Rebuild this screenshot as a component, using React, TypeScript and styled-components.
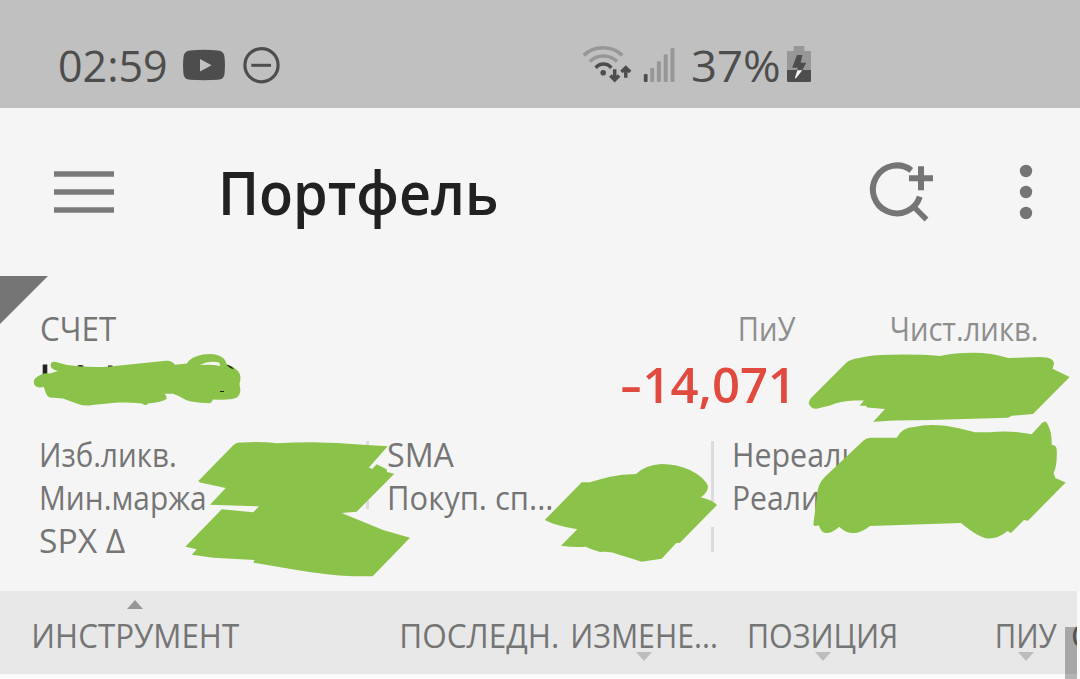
import styled, { createGlobalStyle } from 'styled-components';

const App: React.FC = () => {
  return (
    <>
      <GlobalStyle />
      <Screen>
        <StatusBar>
          <StatusText $width={107}>02:59</StatusText>
          <YoutubeIcon />
          <DoNotDisturbIcon />
          <StatusSpacer />
          <WifiIcon />
          <SignalIcon />
          <StatusText $width={96} $scale={1.06}>
            37%
          </StatusText>
          <BatteryIcon />
        </StatusBar>

        <AppBar>
          <MenuIcon />
          <Title>Портфель</Title>
          <SearchAddIcon />
          <MoreIcon />
        </AppBar>

        <Account>
          <Corner />
          <Summary>
            <SummaryColumn $width={456}>
              <Label $scale={0.98}>СЧЕТ</Label>
            </SummaryColumn>
            <SummaryColumn $width={299} $right>
              <Label $scale={0.91} $light $right>
                ПиУ
              </Label>
              <Amount>
                <Minus>-</Minus>14,071
              </Amount>
            </SummaryColumn>
            <SummaryColumn $width={243} $right>
              <Label $scale={0.91} $light $right>
                Чист.ликв.
              </Label>
            </SummaryColumn>
          </Summary>
          <Stats>
            <StatsColumn $width={329}>
              <StatLabel $scale={0.923}>Изб.ликв.</StatLabel>
              <StatLabel $scale={0.932}>Мин.маржа</StatLabel>
              <StatLabel $scale={1.05}>SPX Δ</StatLabel>
            </StatsColumn>
            <Divider />
            <StatsColumn $width={326}>
              <StatLabel $scale={1.005}>SMA</StatLabel>
              <StatLabel $scale={0.967}>Покуп. сп...</StatLabel>
            </StatsColumn>
            <Divider />
            <StatsColumn $width={340}>
              <StatLabel $scale={0.95}>Нереализ.</StatLabel>
              <StatLabel $scale={0.94}>Реализ.</StatLabel>
            </StatsColumn>
          </Stats>
        </Account>

        <TableHeader>
          <HeaderCell $width={369}>
            <HeaderContent>
              <SortUp />
              <HeaderLabel $scale={0.978}>ИНСТРУМЕНТ</HeaderLabel>
            </HeaderContent>
          </HeaderCell>
          <HeaderCell $width={168}>
            <HeaderContent>
              <SortSlot />
              <HeaderLabel $scale={0.985}>ПОСЛЕДН.</HeaderLabel>
            </HeaderContent>
          </HeaderCell>
          <HeaderCell $width={177}>
            <HeaderContent>
              <SortSlot />
              <HeaderLabel $scale={0.945}>ИЗМЕНЕ...</HeaderLabel>
              <SortDown />
            </HeaderContent>
          </HeaderCell>
          <HeaderCell $width={249}>
            <HeaderContent>
              <SortSlot />
              <HeaderLabel $scale={0.95}>ПОЗИЦИЯ</HeaderLabel>
              <SortDown />
            </HeaderContent>
          </HeaderCell>
          <HeaderCell $width={79}>
            <HeaderContent>
              <SortSlot />
              <HeaderLabel $scale={0.92}>ПИУ</HeaderLabel>
              <SortDown />
            </HeaderContent>
          </HeaderCell>
          <HeaderCell $width={6}>
            <HeaderContent>
              <SortSlot />
              <HeaderLabel>С</HeaderLabel>
            </HeaderContent>
          </HeaderCell>
        </TableHeader>
        <ScrollThumb />
        <Scribbles />
      </Screen>
    </>
  );
};

export default App;

const YoutubeIcon = () => (
  <StatusSvg width="42" height="40" $left={18}>
    <path
      d="M7 6.5Q21 5 35 6.5Q41 7 41.5 13Q42.4 21 41.5 30Q41 35.6 35 35.8Q21 36.6 7 35.8Q1 35.6 0.5 30Q-0.4 21 0.5 13Q1 7 7 6.5Z"
      fill="#4d4d4d"
    />
    <path d="M17 15L28.6 21.3L17 27.6Z" fill="#c0c0c0" />
  </StatusSvg>
);

const DoNotDisturbIcon = () => (
  <StatusSvg width="38" height="40" $left={18}>
    <circle cx="18.5" cy="21.2" r="16.6" fill="none" stroke="#4d4d4d" strokeWidth="3.2" />
    <path d="M8.3 21.3H28" stroke="#4d4d4d" strokeWidth="3" />
  </StatusSvg>
);

const WifiIcon = () => (
  <StatusSvg width="50" height="40" fill="none" strokeWidth="3.5">
    <path d="M1.8 11.4Q9.5 3.8 21 3.8T40.3 11.4" stroke="#979797" />
    <path d="M8 17.6Q13.2 12 21.3 12T35 17.6" stroke="#979797" />
    <path d="M13.7 23.8Q16.8 20 21.5 20T29.3 23.8" stroke="#4d4d4d" />
    <circle cx="21.2" cy="28.8" r="2.8" fill="#4d4d4d" />
    <path d="M32.7 25.3V35.5M28.3 31.6L32.7 36L37.1 31.6" stroke="#4d4d4d" />
    <path d="M43.8 33.8V24M39.4 28L43.8 23.6L48.2 28" stroke="#4d4d4d" />
  </StatusSvg>
);

const SignalIcon = () => (
  <StatusSvg width="34" height="40" $left={10} fill="#979797">
    <rect x="1.8" y="30" width="3.8" height="8" rx="1" fill="#4d4d4d" />
    <rect x="8.2" y="24" width="4" height="14" rx="1" />
    <rect x="14.9" y="17.2" width="4" height="20.8" rx="1" />
    <rect x="21.7" y="10.2" width="4" height="27.8" rx="1" />
    <rect x="28.5" y="4" width="4" height="34" rx="1" />
  </StatusSvg>
);

const BatteryIcon = () => (
  <StatusSvg width="24" height="40">
    <path d="M6.7 7V2H17.3V7H24V26.2H0V7Z" fill="#979797" />
    <path d="M0 26H24V36.5Q24 38 22.5 38H1.5Q0 38 0 36.5Z" fill="#4d4d4d" />
    <path d="M10 11H15.4L13.7 18.7H19.2L15.3 26.2H10.2L10.8 23.8H5.2Z" fill="#4d4d4d" />
    <path d="M10.4 26.2H15.3L9 34.3H7.8Z" fill="#f5f5f5" />
  </StatusSvg>
);

const MenuIcon = () => (
  <svg width="60" height="48" stroke="#7a7a7a" strokeWidth="5.6">
    <path d="M0 6H60M0 24H60M0 42H60" />
  </svg>
);

const SearchAddIcon = () => (
  <svg width="66" height="66" viewBox="868 159 66 66" fill="none" stroke="#757575" strokeWidth="6">
    <path d="M911.4 170.3A24 24 0 1 0 919.8 196.6" />
    <path d="M913.5 206.5L926.5 219.5" strokeWidth="5.4" />
    <path d="M921 166.3V190.3M909 178.3H933" />
  </svg>
);

const MoreIcon = () => (
  <MoreSvg width="14" height="56" fill="#757575">
    <circle cx="7" cy="7" r="6.2" />
    <circle cx="7" cy="28" r="6.2" />
    <circle cx="7" cy="49" r="6.2" />
  </MoreSvg>
);

const Scribbles = () => (
  <ScribbleLayer width="1080" height="679" fill="#8bc34a">
    <path
      d="M42.7 364.5H47.3V376H42.7ZM77 366Q80 364 84 366L80 369ZM108 365.6H112.5V368H108Z"
      fill="#212121"
    />
    <path
      fillRule="evenodd"
      d="M50.7 365Q51 361 56 362L67 365Q88 368 110 366.5L166 360.8Q172 360.5 175 364.8L187 363.5Q190 357 203 354.5Q212 353 218 355.2Q225 357.5 226.7 364Q233 366 238 371Q242 376 239.5 384Q242 394 237 397.5Q230 400.5 213 399.5Q211 404.5 207 403Q193 402.5 186 400Q180 396 173 393.7H164Q167 395 166.5 399Q162 402 148 403.5Q146 406.5 142 403.5Q130 402 118 402.5L92 405Q85 406.5 78 404L63 398.6L50 397.5Q46 396 44.5 389Q43 385 43.5 387Q36 388.5 34 384Q33 379 37 377Q43 372 50 373.5L58 371Q50 369 50.7 365ZM200 365Q209 360 219 362.5L220.5 366Q211 364 200 365Z"
    />
    <path d="M226.5 365Q231 365 234 369.5Q230 368.5 226.5 365ZM220 391H224V392H220Z" fill="#212121" />
    <path d="M809 404Q808 401 812 397L845 364Q849 359 860 357.7Q872 354.7 890 354.7Q918 354 940 356Q955 352.7 973 352.7Q992 352.7 1008 358L1040 357Q1054 357 1054 364L1052.5 368.7L1069.7 377L1033 414L1012 415.7L1008 417.7L930 420Q890 420 873 422L885 409L867 407.5L866 405.7H859.5L864 400.5H855Q840 401 830 405.5L816.5 408.7Q811 409 809 404Z" />
    <path d="M198.3 481L233 445.5Q236 442 242 442.5Q260 441 277 443.3Q320 440.5 363 444.7L387.7 446.3L369 467.5L372 469L376.7 464.3L386.7 469.3L387 472L394.3 473.7L356.7 511.7L341.7 513L383 530L410 537.7L372.7 576.3H353Q325 575 296.7 570L253.3 562.7L254.5 560L213.3 557.7L191.7 554.7L196.7 549.3L185.3 546.7L221.7 509.3L253.3 512.3L259 506.3L210 504.7L225.7 488L200 482.5Z" />
    <path d="M544.7 520L581.7 482.3L590 482.3Q600 479 610 476.7Q622 474 636 474Q645 465 661.7 464Q677 464 690 470Q704 477 708 486Q708 493 700.7 497.3Q712 500 717 505L680 542.7L676 543.3L661.7 558.7L641.7 561.7Q630 558 620 555Q610 550.5 600 552Q590 549 586 546.7Q574 547.5 561 545.7L577.3 529.3Q556 526 544.7 520Z" />
    <path d="M813.3 525L816.7 498.3Q817 484 825 476.7L863 441Q866 438 870 437.7H896.7Q902 427.5 914 427Q933 422.5 960 428.5L975 432.3H990Q1010 430 1031.7 434.3L1042 423Q1046 419.5 1047.5 424Q1052 432 1051.7 444.7Q1056.7 445 1056.7 450Q1057.5 464 1053.7 473.3L1055.3 478L1065.7 482.5L1028 520.7L1024 520L1011 533L1007.5 531Q998 539 988 538.5Q979 538 961 523L870 526Q860 534 851.7 533Q845 532.5 839.3 526.7Q831 534 825 533Q821 532 818.7 525.3Q815 527 813.3 525Z" />
  </ScribbleLayer>
);

const GlobalStyle = createGlobalStyle`
  body {
    margin: 0;
    overflow: hidden;
    background-color: #fafafa;
    font-family: 'Open Sans', 'Noto Sans', sans-serif;
  }

  * {
    box-sizing: border-box;
  }
`;

const Screen = styled.div`
  position: relative;
  width: 1080px;
  height: 679px;
  overflow: hidden;
  background-color: #fafafa;
`;

const StatusBar = styled.div`
  height: 108px;
  padding: 20px 0 0 58px;
  display: flex;
  align-items: center;
  background-color: #c0c0c0;
`;

const StatusText = styled.div<{ $width: number; $scale?: number }>`
  width: ${({ $width }) => $width}px;
  flex-shrink: 0;
  padding-top: 4px;
  font-size: 43px;
  line-height: 50px;
  color: #4d4d4d;
  transform: scaleX(${({ $scale = 1 }) => $scale});
  transform-origin: left;
`;

const StatusSpacer = styled.div`
  width: 301px;
`;

const StatusSvg = styled.svg<{ $left?: number }>`
  flex-shrink: 0;
  margin-left: ${({ $left = 0 }) => $left}px;

  & + ${StatusText} {
    margin-left: 15px;
  }
`;

const AppBar = styled.header`
  height: 168px;
  padding: 0 47px 0 54px;
  display: flex;
  align-items: center;
  background-color: #f5f5f5;
`;

const Title = styled.h1`
  width: 650px;
  margin: 0 0 0 104px;
  font-size: 60px;
  font-weight: 600;
  line-height: 80px;
  color: #212121;
  transform: scaleX(0.929);
  transform-origin: left;
`;

const MoreSvg = styled.svg`
  margin-left: auto;
`;

const Account = styled.section`
  height: 315px;
  position: relative;
  padding-top: 33px;
  background-color: #f5f5f5;
`;

const Corner = styled.div`
  position: absolute;
  top: 0;
  left: 0;
  border-top: 48px solid #757575;
  border-right: 48px solid transparent;
`;

const Summary = styled.div`
  height: 124px;
  padding-left: 40px;
  display: flex;
`;

const SummaryColumn = styled.div<{ $width: number; $right?: boolean }>`
  width: ${({ $width }) => $width}px;
  display: flex;
  flex-direction: column;
  align-items: ${({ $right }) => ($right ? 'flex-end' : 'flex-start')};
`;

const Label = styled.div<{ $scale?: number; $light?: boolean; $right?: boolean }>`
  font-size: 32px;
  line-height: 40px;
  white-space: nowrap;
  color: ${({ $light }) => ($light ? '#8e8e8e' : '#757575')};
  transform: scaleX(${({ $scale = 1 }) => $scale});
  transform-origin: ${({ $right }) => ($right ? 'right' : 'left')};
`;

const Amount = styled.div`
  margin: 5px -1px 0 0;
  display: flex;
  font-size: 49px;
  font-weight: 600;
  line-height: 60px;
  color: #e04a3f;
`;

const Minus = styled.span`
  width: 23px;
  transform: scaleX(1.4);
  transform-origin: left;
`;

const Stats = styled.div`
  padding-left: 37px;
  display: flex;
`;

const StatsColumn = styled.div<{ $width: number }>`
  width: ${({ $width }) => $width}px;
  padding-left: 2px;
`;

const StatLabel = styled(Label)`
  line-height: 43px;
`;

const Divider = styled.div`
  width: 3px;
  height: 111px;
  margin: 8px 16px 0 0;
  background: linear-gradient(#dcdcdc 68px, transparent 68px 86px, #dcdcdc 86px);
`;

const TableHeader = styled.div`
  width: 1077px;
  height: 83px;
  padding-left: 29px;
  display: flex;
  overflow: hidden;
  background-color: #e8e8e8;
`;

const HeaderCell = styled.div<{ $width: number }>`
  width: ${({ $width }) => $width}px;
  flex-shrink: 0;
  padding-top: 9px;
`;

const HeaderContent = styled.div`
  width: max-content;
  display: flex;
  flex-direction: column;
  align-items: center;
`;

const SortSlot = styled.div`
  height: 9px;
`;

const SortUp = styled.div`
  border: 8.5px solid transparent;
  border-top-width: 0;
  border-bottom: 9px solid #979797;
`;

const SortDown = styled.div`
  margin-top: -8px;
  border: 8.5px solid transparent;
  border-bottom-width: 0;
  border-top: 9px solid #bdbdbd;
`;

const HeaderLabel = styled.div<{ $scale?: number }>`
  font-size: 32px;
  line-height: 51px;
  white-space: nowrap;
  color: #757575;
  transform: translateY(0.5px) scaleX(${({ $scale = 1 }) => $scale});
`;

const ScrollThumb = styled.div`
  position: absolute;
  top: 627px;
  left: 1065px;
  width: 12px;
  height: 52px;
  background-color: rgba(0, 0, 0, 0.28);
`;

const ScribbleLayer = styled.svg`
  position: absolute;
  top: 0;
  left: 0;
`;
